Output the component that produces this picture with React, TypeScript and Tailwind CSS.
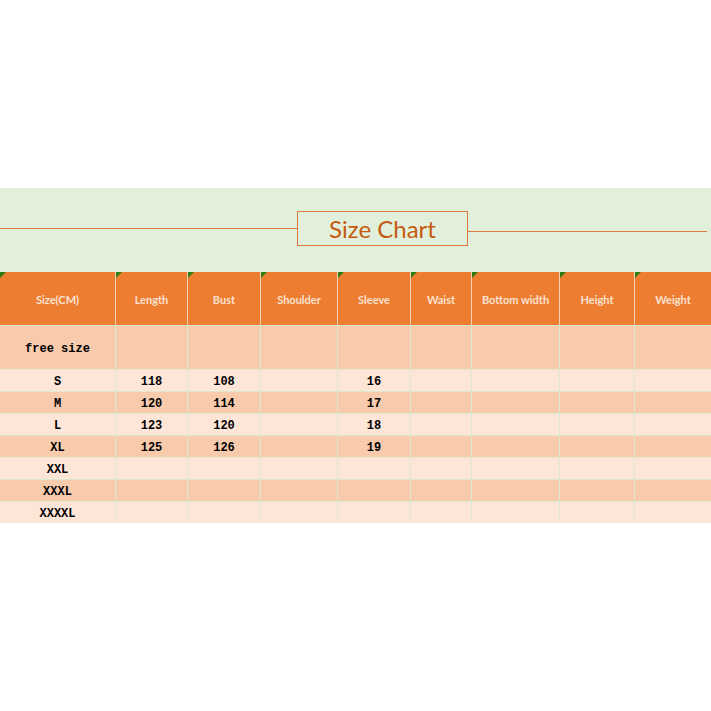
import * as React from "react"

const cols = ["Size(CM)", "Length", "Bust", "Shoulder", "Sleeve", "Waist", "Bottom width", "Height", "Weight"]

const rows: { size: string; vals: string[]; tall?: boolean }[] = [
  { size: "free size", vals: [], tall: true },
  { size: "S", vals: ["118", "108", "", "16"] },
  { size: "M", vals: ["120", "114", "", "17"] },
  { size: "L", vals: ["123", "120", "", "18"] },
  { size: "XL", vals: ["125", "126", "", "19"] },
  { size: "XXL", vals: [] },
  { size: "XXXL", vals: [] },
  { size: "XXXXL", vals: [] },
]

const grid = "grid grid-cols-[115px_72px_73px_77px_73px_61px_88px_75px_77px]"

export default function App() {
  return (
    <div className="w-[711px] h-[711px] bg-white flex flex-col">
      <div className="h-[188px]" />
      <div className="h-[84px] bg-[#e2efda] flex items-center">
        <div className="w-[297px] h-px bg-[#dc7a3c] mt-[-3px]" />
        <div
          className="w-[171px] h-[35px] border border-[#dc7a3c] flex items-center justify-center text-[#c55a11] text-[24px] mt-[-3px]"
          style={{ fontFamily: "Lato, 'Open Sans', sans-serif" }}
        >
          Size Chart
        </div>
        <div className="w-[239px] h-px bg-[#dc7a3c] mt-[2px]" />
      </div>
      <div className={`${grid} h-[53px] bg-[#ed7d31]`} style={{ fontFamily: "Lato, 'Open Sans', sans-serif" }}>
        {cols.map((c, i) => (
          <div
            key={c}
            className={`relative flex items-center justify-center pt-[4px] text-[11px] font-bold text-[#fbe2d2] ${i > 0 ? "border-l border-[#f5d3bb]" : ""}`}
          >
            <span className="absolute left-0 top-0 w-0 h-0 border-t-[6px] border-r-[6px] border-t-[#2e7d12] border-r-transparent" />
            {c}
          </div>
        ))}
      </div>
      {rows.map((r, ri) => (
        <div
          key={r.size}
          className={`${grid} ${r.tall ? "h-[44px]" : "h-[22px]"} ${ri % 2 === 0 ? "bg-[#f8cbad]" : "bg-[#fde5d8]"} border-t border-[#dde8cf]`}
          style={{ fontFamily: "'Liberation Mono', 'DejaVu Sans Mono', monospace" }}
        >
          {cols.map((c, i) => (
            <div
              key={c}
              className={`flex items-center justify-center pt-[3px] text-[12px] font-bold text-black ${i > 0 ? "border-l border-[#dde8cf]" : ""}`}
            >
              {i === 0 ? r.size : r.vals[i - 1] ?? ""}
            </div>
          ))}
        </div>
      ))}
    </div>
  )
}
